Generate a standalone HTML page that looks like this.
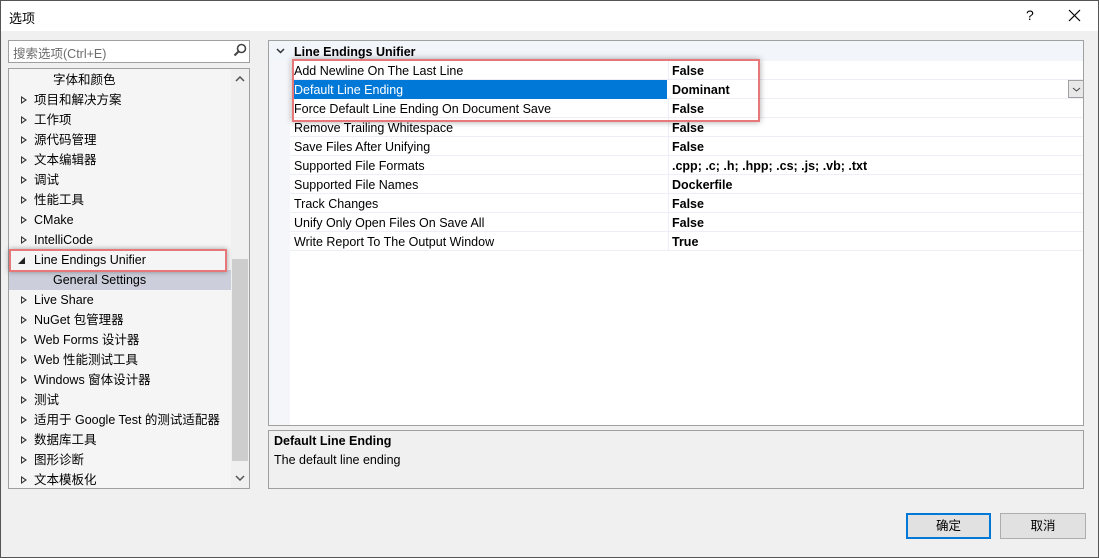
<!DOCTYPE html>
<html><head><meta charset="utf-8"><style>
*{box-sizing:border-box;margin:0;padding:0}
body{width:1099px;height:558px;overflow:hidden;background:#f0f0f0;font-family:"Liberation Sans","Noto Sans CJK SC",sans-serif;font-size:12.5px;color:#000;position:relative}
.abs{position:absolute}
.title{left:0;top:0;width:1099px;height:31px;background:#fff}
.tree{left:8px;top:68px;width:242px;height:421px;border:1px solid #a0a0a0;background:#f5f5f5;overflow:hidden}
.row{position:absolute;left:0;height:20px;line-height:21px;white-space:nowrap}
.tri{position:absolute;left:12px;top:6px;width:0;height:0;border-left:6px solid #333;border-top:4px solid transparent;border-bottom:4px solid transparent}
.tri:after{content:"";position:absolute;left:-5px;top:-2px;border-left:3px solid #f5f5f5;border-top:2px solid transparent;border-bottom:2px solid transparent}
.grid{left:268px;top:40px;width:816px;height:386px;border:1px solid #a0a0a0;background:#fff;overflow:hidden}
.pr{position:absolute;left:21px;width:794px;height:19px;border-bottom:1px solid #eeeef6;line-height:20px}
.pr .n{position:absolute;left:4px}
.pr .v{position:absolute;left:380px;font-weight:bold;padding-left:2px}
.pr .sep{position:absolute;left:378px;top:0;width:1px;height:19px;background:#eeeef6}
.btn{height:26px;top:513px;background:#e1e1e1;border:1px solid #adadad;text-align:center;line-height:24px}
</style></head><body>
<div class="abs title"></div>
<div class="abs" style="left:9px;top:8px;font-size:13px">选项</div>
<div class="abs" style="left:1026px;top:7px;font-size:14px">?</div>
<svg class="abs" style="left:1068px;top:9px" width="13" height="13"><path d="M1 1L12 12M12 1L1 12" stroke="#000" stroke-width="1.2"/></svg>

<div class="abs" style="left:8px;top:40px;width:242px;height:23px;border:1px solid #a0a0a0;background:#fff"></div>
<div class="abs" style="left:13px;top:43px;color:#6d6d6d">搜索选项(Ctrl+E)</div>
<svg class="abs" style="left:233px;top:43px" width="14" height="14"><circle cx="8.5" cy="5.5" r="4" fill="none" stroke="#444" stroke-width="1.6"/><path d="M5.5 8.5L1.5 12.5" stroke="#444" stroke-width="2"/></svg>

<div class="abs tree">
<div class="row" style="top:1px;left:44px">字体和颜色</div>
<div class="row" style="top:21px;width:222px"><span class="tri"></span><span style="margin-left:25px">项目和解决方案</span></div>
<div class="row" style="top:41px"><span class="tri"></span><span style="margin-left:25px">工作项</span></div>
<div class="row" style="top:61px"><span class="tri"></span><span style="margin-left:25px">源代码管理</span></div>
<div class="row" style="top:81px"><span class="tri"></span><span style="margin-left:25px">文本编辑器</span></div>
<div class="row" style="top:101px"><span class="tri"></span><span style="margin-left:25px">调试</span></div>
<div class="row" style="top:121px"><span class="tri"></span><span style="margin-left:25px">性能工具</span></div>
<div class="row" style="top:141px"><span class="tri"></span><span style="margin-left:25px">CMake</span></div>
<div class="row" style="top:161px"><span class="tri"></span><span style="margin-left:25px">IntelliCode</span></div>
<div class="row" style="top:181px;width:222px"><svg style="position:absolute;left:9px;top:7px" width="7" height="7"><path d="M7 0L7 7L0 7Z" fill="#222"/></svg><span style="margin-left:25px">Line Endings Unifier</span></div>
<div class="row" style="top:201px;width:222px;background:#cccedb"><span style="margin-left:44px">General Settings</span></div>
<div class="row" style="top:221px"><span class="tri"></span><span style="margin-left:25px">Live Share</span></div>
<div class="row" style="top:241px"><span class="tri"></span><span style="margin-left:25px">NuGet 包管理器</span></div>
<div class="row" style="top:261px"><span class="tri"></span><span style="margin-left:25px">Web Forms 设计器</span></div>
<div class="row" style="top:281px"><span class="tri"></span><span style="margin-left:25px">Web 性能测试工具</span></div>
<div class="row" style="top:301px"><span class="tri"></span><span style="margin-left:25px">Windows 窗体设计器</span></div>
<div class="row" style="top:321px"><span class="tri"></span><span style="margin-left:25px">测试</span></div>
<div class="row" style="top:341px"><span class="tri"></span><span style="margin-left:25px">适用于 Google Test 的测试适配器</span></div>
<div class="row" style="top:361px"><span class="tri"></span><span style="margin-left:25px">数据库工具</span></div>
<div class="row" style="top:381px"><span class="tri"></span><span style="margin-left:25px">图形诊断</span></div>
<div class="row" style="top:401px"><span class="tri"></span><span style="margin-left:25px">文本模板化</span></div>
<div class="abs" style="left:222px;top:0;width:18px;height:420px;background:#f0f0f0"></div>
<div class="abs" style="left:223px;top:190px;width:16px;height:202px;background:#cdcdcd"></div>
<svg class="abs" style="left:226px;top:7px" width="10" height="6"><path d="M1 5L5 1L9 5" fill="none" stroke="#555" stroke-width="1.5"/></svg>
<svg class="abs" style="left:226px;top:406px" width="10" height="6"><path d="M1 1L5 5L9 1" fill="none" stroke="#555" stroke-width="1.5"/></svg>
</div>
<div class="abs" style="left:9px;top:249px;width:218px;height:23px;border:2px solid #e8777a;box-shadow:0 0 5px rgba(0,0,0,.35)"></div>

<div class="abs grid">
<div class="abs" style="left:0;top:0;width:815px;height:20px;background:#f2f5fa"></div>
<div class="abs" style="left:0;top:20px;width:21px;height:380px;background:#f5f6fa"></div>
<svg class="abs" style="left:7px;top:7px" width="9" height="6"><path d="M1 1L4.5 4.5L8 1" fill="none" stroke="#333" stroke-width="1.5"/></svg>
<div class="abs" style="left:25px;top:4px;font-weight:bold">Line Endings Unifier</div>
<div class="pr" style="top:20px"><span class="sep"></span><span class="n">Add Newline On The Last Line</span><span class="v">False</span></div>
<div class="pr" style="top:39px"><span style="position:absolute;left:3px;top:0;width:374px;height:19px;background:#0078d7"></span><span class="n" style="color:#fff">Default Line Ending</span><span class="v">Dominant</span>
<div class="abs" style="left:778px;top:0;width:16px;height:18px;border:1px solid #a0a0a0;background:#e8e8e8"></div>
<svg class="abs" style="left:782px;top:7px" width="9" height="5"><path d="M1 1L4.5 4L8 1" fill="none" stroke="#444"/></svg></div>
<div class="pr" style="top:58px"><span class="sep"></span><span class="n">Force Default Line Ending On Document Save</span><span class="v">False</span></div>
<div class="pr" style="top:77px"><span class="sep"></span><span class="n">Remove Trailing Whitespace</span><span class="v">False</span></div>
<div class="pr" style="top:96px"><span class="sep"></span><span class="n">Save Files After Unifying</span><span class="v">False</span></div>
<div class="pr" style="top:115px"><span class="sep"></span><span class="n">Supported File Formats</span><span class="v">.cpp; .c; .h; .hpp; .cs; .js; .vb; .txt</span></div>
<div class="pr" style="top:134px"><span class="sep"></span><span class="n">Supported File Names</span><span class="v">Dockerfile</span></div>
<div class="pr" style="top:153px"><span class="sep"></span><span class="n">Track Changes</span><span class="v">False</span></div>
<div class="pr" style="top:172px"><span class="sep"></span><span class="n">Unify Only Open Files On Save All</span><span class="v">False</span></div>
<div class="pr" style="top:191px"><span class="sep"></span><span class="n">Write Report To The Output Window</span><span class="v">True</span></div>
</div>
<div class="abs" style="left:292px;top:59px;width:468px;height:63px;border:2px solid #e8777a;box-shadow:0 0 6px rgba(0,0,0,.35)"></div>

<div class="abs" style="left:268px;top:430px;width:816px;height:59px;border:1px solid #a0a0a0;background:#f0f0f0"></div>
<div class="abs" style="left:274px;top:434px;font-weight:bold">Default Line Ending</div>
<div class="abs" style="left:274px;top:453px">The default line ending</div>

<div class="abs btn" style="left:906px;width:85px;border:2px solid #0078d7;line-height:22px">确定</div>
<div class="abs btn" style="left:1000px;width:86px">取消</div>
<div class="abs" style="left:0;top:0;width:1099px;height:558px;border:1px solid #555;pointer-events:none"></div>
</body></html>
